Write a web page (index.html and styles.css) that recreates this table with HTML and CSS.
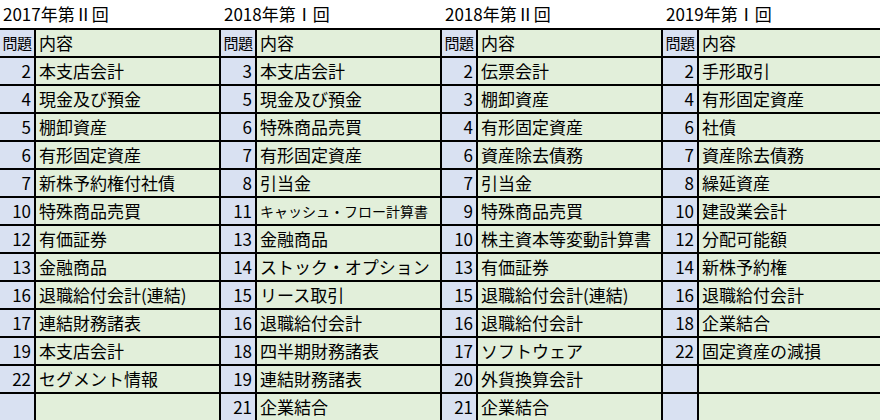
FILE: index.html
```html
<!DOCTYPE html>
<html lang="ja">
<head>
<meta charset="utf-8">
<link rel="stylesheet" href="styles.css">
</head>
<body>
<div class="sheet">
  <section class="block">
    <div class="title">2017年第Ⅱ回</div>
    <div class="grid">
      <div class="cell num head">問題</div><div class="cell txt">内容</div>
      <div class="cell num">2</div><div class="cell txt">本支店会計</div>
      <div class="cell num">4</div><div class="cell txt">現金及び預金</div>
      <div class="cell num">5</div><div class="cell txt">棚卸資産</div>
      <div class="cell num">6</div><div class="cell txt">有形固定資産</div>
      <div class="cell num">7</div><div class="cell txt">新株予約権付社債</div>
      <div class="cell num">10</div><div class="cell txt">特殊商品売買</div>
      <div class="cell num">12</div><div class="cell txt">有価証券</div>
      <div class="cell num">13</div><div class="cell txt">金融商品</div>
      <div class="cell num">16</div><div class="cell txt">退職給付会計(連結)</div>
      <div class="cell num">17</div><div class="cell txt">連結財務諸表</div>
      <div class="cell num">19</div><div class="cell txt">本支店会計</div>
      <div class="cell num">22</div><div class="cell txt">セグメント情報</div>
      <div class="cell num"></div><div class="cell txt"></div>
    </div>
  </section>
  <section class="block">
    <div class="title">2018年第Ⅰ回</div>
    <div class="grid">
      <div class="cell num head">問題</div><div class="cell txt">内容</div>
      <div class="cell num">3</div><div class="cell txt">本支店会計</div>
      <div class="cell num">5</div><div class="cell txt">現金及び預金</div>
      <div class="cell num">6</div><div class="cell txt">特殊商品売買</div>
      <div class="cell num">7</div><div class="cell txt">有形固定資産</div>
      <div class="cell num">8</div><div class="cell txt">引当金</div>
      <div class="cell num">11</div><div class="cell txt small">キャッシュ・フロー計算書</div>
      <div class="cell num">13</div><div class="cell txt">金融商品</div>
      <div class="cell num">14</div><div class="cell txt">ストック・オプション</div>
      <div class="cell num">15</div><div class="cell txt">リース取引</div>
      <div class="cell num">16</div><div class="cell txt">退職給付会計</div>
      <div class="cell num">18</div><div class="cell txt">四半期財務諸表</div>
      <div class="cell num">19</div><div class="cell txt">連結財務諸表</div>
      <div class="cell num">21</div><div class="cell txt">企業結合</div>
    </div>
  </section>
  <section class="block">
    <div class="title">2018年第Ⅱ回</div>
    <div class="grid">
      <div class="cell num head">問題</div><div class="cell txt">内容</div>
      <div class="cell num">2</div><div class="cell txt">伝票会計</div>
      <div class="cell num">3</div><div class="cell txt">棚卸資産</div>
      <div class="cell num">4</div><div class="cell txt">有形固定資産</div>
      <div class="cell num">6</div><div class="cell txt">資産除去債務</div>
      <div class="cell num">7</div><div class="cell txt">引当金</div>
      <div class="cell num">9</div><div class="cell txt">特殊商品売買</div>
      <div class="cell num">10</div><div class="cell txt">株主資本等変動計算書</div>
      <div class="cell num">13</div><div class="cell txt">有価証券</div>
      <div class="cell num">15</div><div class="cell txt">退職給付会計(連結)</div>
      <div class="cell num">16</div><div class="cell txt">退職給付会計</div>
      <div class="cell num">17</div><div class="cell txt">ソフトウェア</div>
      <div class="cell num">20</div><div class="cell txt">外貨換算会計</div>
      <div class="cell num">21</div><div class="cell txt">企業結合</div>
    </div>
  </section>
  <section class="block">
    <div class="title">2019年第Ⅰ回</div>
    <div class="grid">
      <div class="cell num head">問題</div><div class="cell txt">内容</div>
      <div class="cell num">2</div><div class="cell txt">手形取引</div>
      <div class="cell num">4</div><div class="cell txt">有形固定資産</div>
      <div class="cell num">6</div><div class="cell txt">社債</div>
      <div class="cell num">7</div><div class="cell txt">資産除去債務</div>
      <div class="cell num">8</div><div class="cell txt">繰延資産</div>
      <div class="cell num">10</div><div class="cell txt">建設業会計</div>
      <div class="cell num">12</div><div class="cell txt">分配可能額</div>
      <div class="cell num">14</div><div class="cell txt">新株予約権</div>
      <div class="cell num">16</div><div class="cell txt">退職給付会計</div>
      <div class="cell num">18</div><div class="cell txt">企業結合</div>
      <div class="cell num">22</div><div class="cell txt">固定資産の減損</div>
      <div class="cell num"></div><div class="cell txt"></div>
      <div class="cell num"></div><div class="cell txt"></div>
    </div>
  </section>
</div>
</body>
</html>
```

FILE: styles.css
```css
html, body {
  margin: 0;
  padding: 0;
  background: #ffffff;
}

body {
  width: 880px;
  height: 420px;
  overflow: hidden;
  font-family: "Noto Sans CJK JP", "Noto Sans", sans-serif;
  font-size: 17px;
  color: #000000;
}

.sheet {
  display: flex;
  width: 884px;
}

.block {
  width: 221px;
  flex: none;
}

.title {
  height: 28px;
  padding-left: 3px;
  display: flex;
  align-items: center;
  line-height: 1;
  padding-bottom: 1px;
  box-sizing: border-box;
  white-space: nowrap;
}

.grid {
  display: grid;
  grid-template-columns: 36px 185px;
  grid-auto-rows: 28px;
  border-top: 2px solid #000;
}

.cell {
  box-sizing: border-box;
  border-right: 2px solid #000;
  border-bottom: 2px solid #000;
  display: flex;
  align-items: center;
  line-height: 1;
  padding-bottom: 1px;
  white-space: nowrap;
  overflow: hidden;
}

.num {
  background: #d9e1f2;
  justify-content: flex-end;
  padding-right: 3px;
}

.num.head {
  font-size: 15px;
  justify-content: center;
  padding-right: 0;
  letter-spacing: -0.5px;
}

.txt {
  background: #e2efda;
  padding-left: 3px;
}

.txt.small {
  font-size: 14px;
}
```
